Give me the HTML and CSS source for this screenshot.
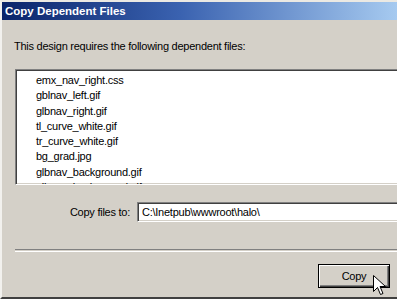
FILE: index.html
```html
<!DOCTYPE html>
<html>
<head lang="en">
    <meta charset="UTF-8">
    <title>Copy Dependent Files</title>
    <link rel="stylesheet" href="styles.css">
</head>
<body>
<div class="dialog">
    <div class="dialog-title">Copy Dependent Files</div>
    <div class="dialog-body">
        <p class="intro">This design requires the following dependent files:</p>
        <ul class="file-list">
            <li>emx_nav_right.css</li>
            <li>gblnav_left.gif</li>
            <li>glbnav_right.gif</li>
            <li>tl_curve_white.gif</li>
            <li>tr_curve_white.gif</li>
            <li>bg_grad.jpg</li>
            <li>glbnav_background.gif</li>
            <li>glbnav_background.gif</li>
        </ul>
        <div class="target-row">
            <label class="target-label">Copy files to:</label>
            <input type="text" class="target-input" value="C:\Inetpub\wwwroot\halo\">
        </div>
        <div class="separator"></div>
        <div class="button-row">
            <div class="copy-button">Copy
                <!-- mouse pointer over the button -->
                <svg class="pointer" width="13" height="22" viewBox="0 0 13 22">
                    <path d="M0.5 0.5 L0.5 16.5 L4.5 12.5 L7.5 19.5 L10 18.5 L7 11.5 L12.5 11.5 Z" fill="#fff" stroke="#000" stroke-width="1"/>
                </svg>
            </div>
        </div>
    </div>
</div>
</body>
</html>
```

FILE: styles.css
```css
body, p, ul, li, div, label {
    margin: 0px;
    padding: 0px;
}
body {
    width: 397px;
    height: 299px;
    overflow: hidden;
    background: #d4d0c8;
    font-family: "Liberation Sans", Arial, sans-serif;
    font-size: 11px;
    letter-spacing: -0.25px;
    color: #000000;
}
.dialog {
    height: 299px;
    box-sizing: border-box;
    border-top: 2px solid #ebe9e3;
    border-left: 2px solid #f2f1ee;
    border-bottom: 2px solid #404040;
    display: flex;
    flex-direction: column;
}
.dialog-title {
    height: 18px;
    line-height: 18px;
    padding-left: 3px;
    background: linear-gradient(90deg, #0a246a 0%, #3a62b0 45%, #a6caf0 100%);
    color: #ffffff;
    font-weight: bold;
    font-size: 11.5px;
    letter-spacing: 0px;
}
.dialog-body {
    flex: 1;
    padding: 0px 0px 0px 12px;
    display: flex;
    flex-direction: column;
}
.intro {
    margin-top: 20px;
    height: 13px;
    line-height: 13px;
}
.file-list {
    list-style: none;
    margin: 16px -30px 0px 1px;
    height: 116px;
    box-sizing: border-box;
    background: #ffffff;
    border: 1px solid;
    border-color: #808080 #ffffff #ffffff #808080;
    box-shadow: inset 1px 1px #404040, inset -1px -1px #d4d0c8;
    padding: 3px 0px 0px 20px;
    overflow: hidden;
}
.file-list li {
    height: 15.3px;
    line-height: 15px;
}
.target-row {
    display: flex;
    align-items: center;
    margin-top: 17px;
    height: 20px;
}
.target-label {
    width: 116px;
    text-align: right;
}
.target-input {
    margin-left: 7px;
    flex: 1;
    height: 20px;
    box-sizing: border-box;
    border: 1px solid;
    border-color: #808080 #ffffff #ffffff #808080;
    box-shadow: inset 1px 1px #404040, inset -1px -1px #d4d0c8;
    padding: 0px 0px 0px 4px;
    font-family: "Liberation Sans", Arial, sans-serif;
    font-size: 11px;
    letter-spacing: -0.25px;
    margin-right: -30px;
    outline: none;
}
.separator {
    margin-top: 27px;
    height: 1px;
    border-top: 1px solid #808080;
    border-bottom: 1px solid #ffffff;
    margin-left: 1px;
}
.button-row {
    display: flex;
    justify-content: flex-end;
    padding-right: 7px;
    margin-top: 12px;
}
.copy-button {
    position: relative;
    width: 72px;
    height: 24px;
    line-height: 22px;
    box-sizing: border-box;
    text-align: center;
    border: 1px solid #000000;
    box-shadow: inset 1px 1px #ffffff, inset -1px -1px #404040, inset -2px -2px #808080;
}
.pointer {
    position: absolute;
    left: 54px;
    top: 10px;
}
```
